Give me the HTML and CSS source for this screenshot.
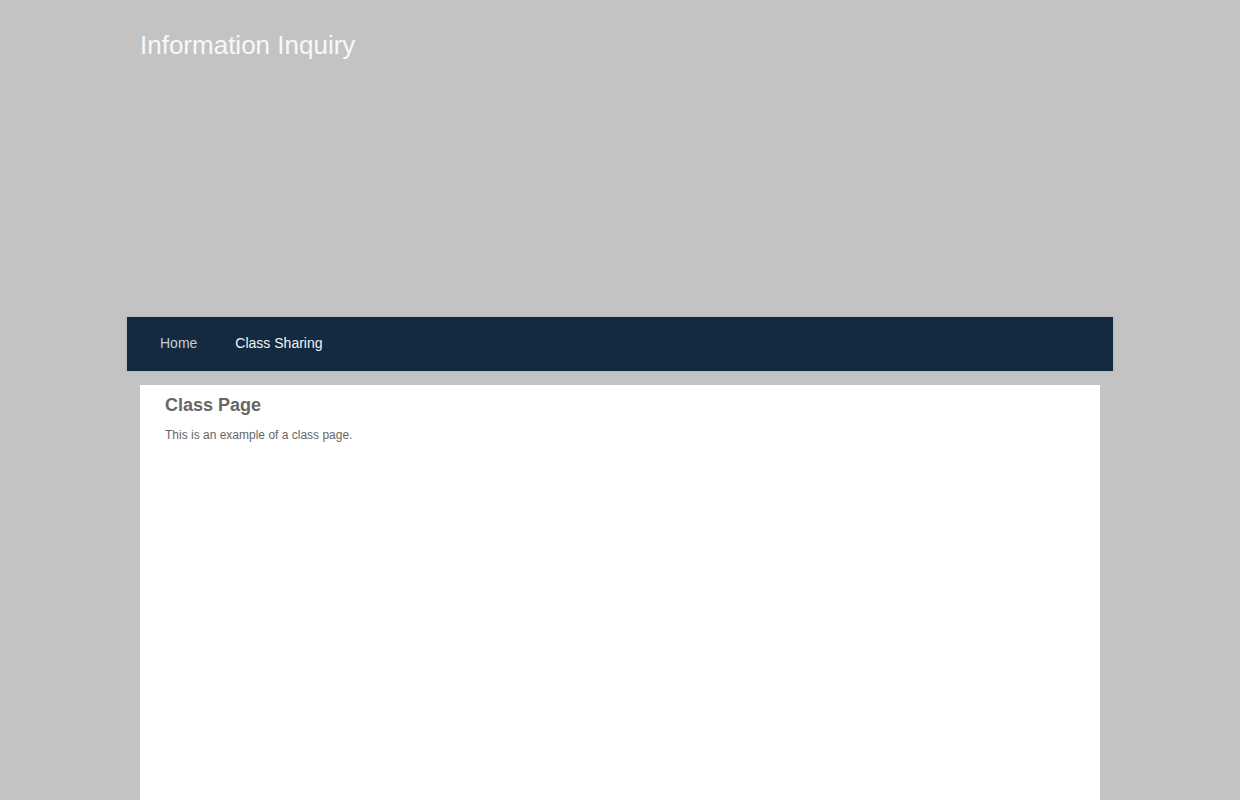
FILE: index.html
```html
<!DOCTYPE html>
<html>
<head>
<meta charset="utf-8">
<link rel="stylesheet" href="styles.css">
</head>
<body>
<header class="header">
  <h1 class="site-title">Information Inquiry</h1>
</header>
<nav class="nav">
  <a class="nav-link" href="#">Home</a>
  <a class="nav-link nav-link-active" href="#">Class Sharing</a>
</nav>
<main class="content">
  <h2 class="page-title">Class Page</h2>
  <p class="page-text">This is an example of a class page.</p>
</main>
</body>
</html>
```
FILE: styles.css
```css
html, body {
  margin: 0;
  padding: 0;
  background: #c3c3c3;
  font-family: "Liberation Sans", Arial, sans-serif;
}
.header {
  width: 960px;
  height: 317px;
  margin: 0 auto;
  box-sizing: border-box;
  padding-top: 31px;
}
.site-title {
  margin: 0;
  font-size: 26px;
  font-weight: normal;
  color: #f8f8f8;
  line-height: 28px;
}
.nav {
  width: 986px;
  height: 54px;
  margin: 0 auto;
  background: #132a40;
  display: flex;
  align-items: center;
  padding-left: 33px;
  padding-bottom: 2px;
  box-sizing: border-box;
  gap: 38px;
  box-shadow: 0 0 2px rgba(0,0,0,0.15);
}
.nav-link {
  font-size: 14px;
  text-decoration: none;
  color: #c6cdd4;
  line-height: 16px;
}
.nav-link-active {
  color: #f4f4f4;
}
.content {
  width: 960px;
  margin: 14px auto 0;
  background: #fff;
  min-height: 415px;
  box-sizing: border-box;
  padding: 10px 25px;
}
.page-title {
  margin: 0;
  font-size: 18px;
  font-weight: bold;
  color: #666;
  line-height: 20px;
}
.page-text {
  margin: 13px 0 0;
  font-size: 12px;
  color: #666;
  line-height: 14px;
}
```
